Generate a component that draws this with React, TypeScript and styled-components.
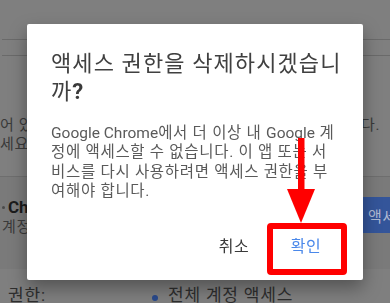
import React from "react";
import styled, { createGlobalStyle } from "styled-components";

const Global = createGlobalStyle`
  html, body { margin: 0; padding: 0; background: #7f7f7f; overflow: hidden; }
  body { font-family: Roboto, "Noto Sans CJK KR", sans-serif; }
  * { box-sizing: border-box; }
`;

const Page = styled.div`
  width: 390px;
  height: 303px;
  overflow: hidden;
  background: #7f7f7f;
  display: flex;
  flex-direction: column;
  color: #353535;
  font-family: Roboto, "Noto Sans CJK KR", sans-serif;
`;

const Bar = styled.div<{ $h: number }>`
  height: ${(p) => p.$h}px;
  margin-left: 2px;
  border-bottom: 1px solid #6a6a6a;
  flex-shrink: 0;
`;

const Intro = styled.div`
  padding-top: 60px;
  font-size: 15px;
  line-height: 19px;
  letter-spacing: 0.6px;
  color: #3a3a3a;
  display: flex;
  flex-direction: column;
`;

const IntroLine = styled.div`
  display: flex;
  justify-content: space-between;
  padding-right: 10px;
  white-space: nowrap;
`;

const Panel = styled.div`
  margin-top: 22px;
  height: 93px;
  flex-shrink: 0;
  border-top: 1px solid #6e6e6e;
  background: #7a7a7a;
  display: flex;
  justify-content: space-between;
  align-items: flex-start;
  padding-top: 20px;
`;

const AppInfo = styled.div`
  display: flex;
  flex-direction: column;
  padding-left: 2px;
`;

const AppName = styled.div`
  display: flex;
  align-items: center;
  gap: 3px;
  font-weight: 700;
  font-size: 17px;
  line-height: 20px;
  color: #1c1c1c;
  &::before {
    content: "";
    width: 3px;
    height: 3px;
    border-radius: 50%;
    background: #4a4a4a;
  }
`;

const AppSub = styled.div`
  font-size: 15px;
  line-height: 20px;
  letter-spacing: 0.6px;
  color: #3a3a3a;
`;

const BlueButton = styled.div`
  width: 60px;
  height: 36px;
  margin-right: -33px;
  background: #34559a;
  color: #aeb9d3;
  font-size: 15px;
  letter-spacing: 0.6px;
  display: flex;
  align-items: center;
  padding-left: 5px;
  white-space: nowrap;
  overflow: hidden;
`;

const PermRow = styled.div`
  display: flex;
  align-items: center;
  padding-top: 15px;
  padding-left: 8px;
  font-size: 17px;
  line-height: 22px;
  letter-spacing: 0.8px;
  color: #2e2e2e;
`;

const PermLabel = styled.div`
  width: 144px;
`;

const PermItem = styled.div`
  display: flex;
  align-items: center;
  gap: 10px;
  &::before {
    content: "";
    width: 6px;
    height: 6px;
    border-radius: 50%;
    background: #2a4a8c;
    margin-top: 6px;
  }
`;

const Overlay = styled.div`
  position: fixed;
  inset: 0;
  display: flex;
  align-items: center;
  justify-content: center;
`;

const Dialog = styled.div`
  width: 336px;
  height: 256px;
  background: #ffffff;
  border-radius: 2px;
  box-shadow: 0 8px 18px rgba(0, 0, 0, 0.35);
  padding: 26px 0 17px 24px;
  display: flex;
  flex-direction: column;
  font-family: Roboto, "Noto Sans CJK KR", sans-serif;
`;

const Title = styled.h2`
  margin: 0;
  padding-right: 20px;
  font-size: 22px;
  line-height: 28px;
  letter-spacing: 1.1px;
  font-weight: 400;
  color: #404040;
`;

const Question = styled.span`
  font-weight: 700;
  color: #3a3a3a;
`;

const Body = styled.p`
  margin: 18px 0 0;
  padding-right: 24px;
  font-size: 15.5px;
  line-height: 19.6px;
  letter-spacing: 0.7px;
  color: #5a5a5a;
`;

const Brand = styled.span`
  letter-spacing: 0;
`;

const Actions = styled.div`
  margin-top: auto;
  display: flex;
  justify-content: flex-end;
  gap: 8px;
  padding-right: 25px;
`;

const Button = styled.button<{ $primary?: boolean }>`
  position: relative;
  height: 36px;
  min-width: 64px;
  padding: 0 16px;
  border: none;
  background: transparent;
  font-family: Roboto, "Noto Sans CJK KR", sans-serif;
  font-size: 16px;
  letter-spacing: 0.6px;
  color: ${(p) => (p.$primary ? "#4a88ea" : "#3a3a3a")};
  cursor: pointer;
`;

const Highlight = styled.span`
  position: absolute;
  left: -7px;
  top: -4px;
  width: 80px;
  height: 52px;
  border: 6px solid #ff0000;
  border-radius: 4px;
  pointer-events: none;
`;

const Arrow = styled.svg`
  position: absolute;
  left: 13px;
  top: -89px;
  width: 28px;
  height: 85px;
  pointer-events: none;
`;

export default function App() {
  return (
    <>
      <Global />
      <Page>
        <Bar $h={40} />
        <Bar $h={16} />
        <Intro>
          <IntroLine>
            <span>어 있는 앱 및 서비스에 대한 액세스 권한이 있습니</span>
            <span>다.</span>
          </IntroLine>
          <IntroLine>
            <span>세요.</span>
          </IntroLine>
        </Intro>
        <Panel>
          <AppInfo>
            <AppName>Chrome</AppName>
            <AppSub>계정 액세스</AppSub>
          </AppInfo>
          <BlueButton>액세스</BlueButton>
        </Panel>
        <PermRow>
          <PermLabel>권한:</PermLabel>
          <PermItem>전체 계정 액세스</PermItem>
        </PermRow>
      </Page>
      <Overlay>
        <Dialog role="dialog">
          <Title>
            액세스 권한을 삭제하시겠습니까<Question>?</Question>
          </Title>
          <Body>
            <Brand>Google Chrome</Brand>에서 더 이상 내 <Brand>Google</Brand> 계정에 액세스할 수 없습니다. 이 앱 또는 서비스를 다시 사용하려면 액세스 권한을 부여해야 합니다.
          </Body>
          <Actions>
            <Button>취소</Button>
            <Button $primary>
              확인
              <Highlight />
              <Arrow viewBox="0 0 28 85">
                <rect x="11" y="0" width="6.5" height="52" fill="#ff0000" />
                <polygon points="0,51 28,51 14,85" fill="#ff0000" />
              </Arrow>
            </Button>
          </Actions>
        </Dialog>
      </Overlay>
    </>
  );
}
